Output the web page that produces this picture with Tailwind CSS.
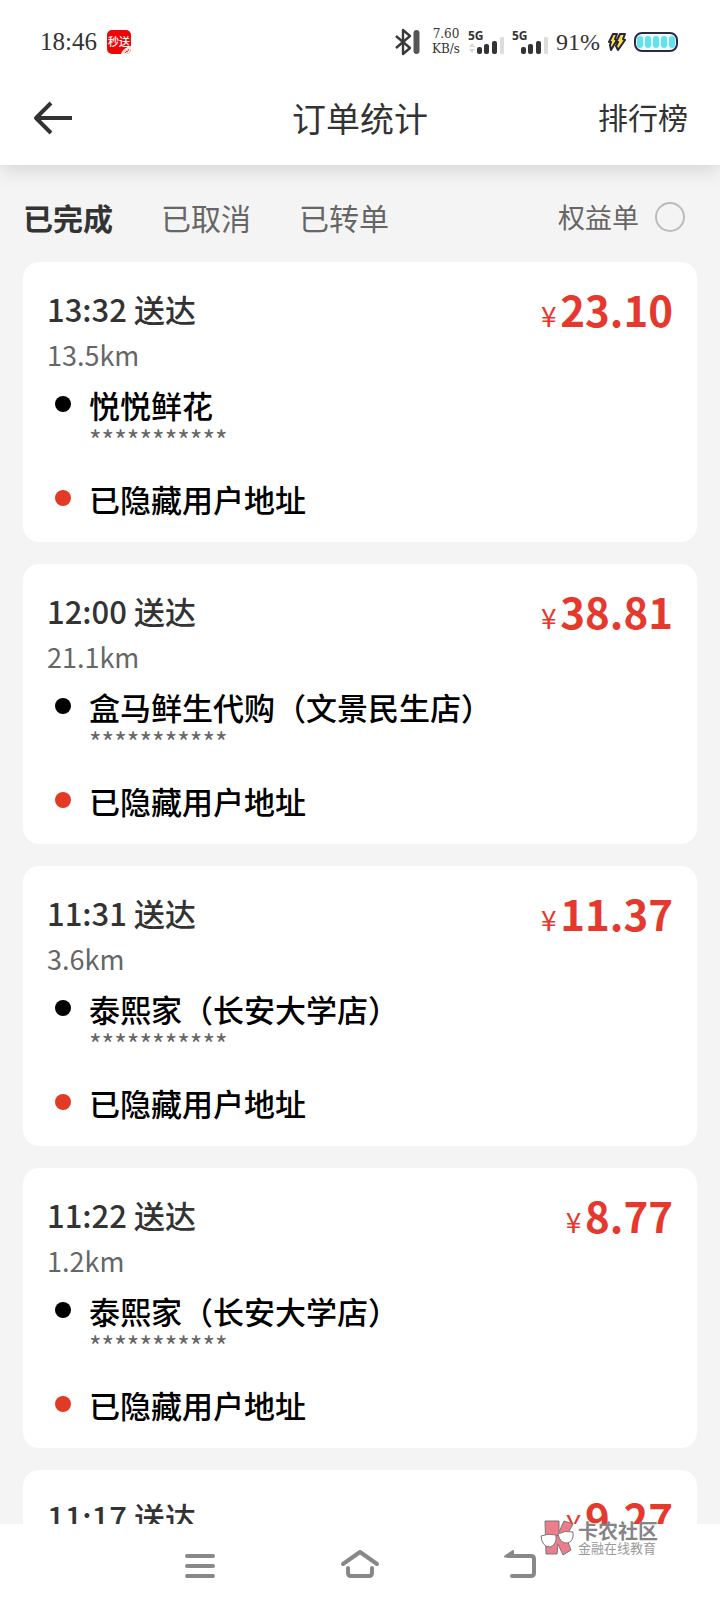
<!DOCTYPE html>
<html lang="zh-CN">
<head>
    <meta charset="UTF-8">
    <meta name="viewport" content="width=device-width, initial-scale=1.0">
    <title>订单统计</title>
    <script src="https://cdn.jsdelivr.net/npm/@tailwindcss/browser@4"></script>
</head>
<body class="relative flex h-screen flex-col overflow-hidden bg-[#f4f4f4] font-['Noto_Sans_CJK_SC',sans-serif] text-[#333]">

    <!-- Top area: status bar + title bar -->
    <header class="relative z-10 shrink-0 bg-white shadow-[0_4px_20px_rgba(0,0,0,0.14)]">
        <div class="flex h-[84px] items-center justify-between pl-10 pr-[42px] font-['Liberation_Serif','Noto_Sans_CJK_SC',serif]">
            <div class="flex items-center gap-2.5">
                <span class="text-[25px] leading-7">18:46</span>
                <span class="relative flex h-6 w-6 items-center justify-center overflow-hidden rounded-[5px] bg-[#ee0505] pb-0.5 font-['Noto_Sans_CJK_SC',sans-serif] text-[11px] font-medium leading-none text-white">秒送
                    <svg class="absolute bottom-0 right-0 h-2 w-2.5" viewBox="0 0 10 8"><path d="M0 8C1 4 5 1 10 0v8z" fill="#fde4e4"/><path d="M4 7l2-2M6 6l2-3" stroke="#c33" stroke-width="1"/></svg>
                </span>
            </div>
            <div class="flex items-center gap-2">
                <svg class="mr-0.5 h-7 w-7" viewBox="0 0 28 28" fill="none" stroke="#3a3a3a">
                    <path d="M2 8l14 12-7 6V2l7 6L2 20" stroke-width="2.4" stroke-linejoin="round"/>
                    <path d="M22.500 5v18" stroke="#555" stroke-width="6" stroke-linecap="round"/>
                </svg>
                <span class="flex flex-col items-center font-['DejaVu_Serif',serif] text-xs leading-[15px]"><span>7.60</span><span>KB/s</span></span>
                <svg class="h-7 w-9" viewBox="0 0 36 28">
                    <text x="0" y="12" font-family="Noto Sans" font-size="12" font-weight="bold" fill="#333">5G</text>
                    <path d="M1 19l3-4 3 4zM1 21l3 4 3-4z" fill="#d8d8d8"/>
                    <rect x="9" y="19" width="5" height="7" rx="2" fill="#333"/>
                    <rect x="16" y="16" width="5" height="10" rx="2" fill="#333"/>
                    <rect x="24" y="13" width="5" height="13" rx="2" fill="#333"/>
                    <rect x="32" y="9" width="4" height="17" rx="1" fill="#ddd"/>
                </svg>
                <svg class="h-7 w-9" viewBox="0 0 36 28">
                    <text x="0" y="12" font-family="Noto Sans" font-size="12" font-weight="bold" fill="#333">5G</text>
                    <rect x="9" y="19" width="5" height="7" rx="2" fill="#333"/>
                    <rect x="16" y="16" width="5" height="10" rx="2" fill="#333"/>
                    <rect x="24" y="13" width="5" height="13" rx="2" fill="#333"/>
                    <rect x="32" y="9" width="4" height="17" rx="1" fill="#ddd"/>
                </svg>
                <span class="text-2xl leading-7">91%</span>
                <svg class="h-5 w-[18px]" viewBox="0 0 18 20" fill="#f6e04e" stroke="#2a2436" stroke-width="2" stroke-linejoin="round">
                    <path d="M5 2h4L7 7l2 1-6 10-1-5 1-3H1z"/>
                    <path d="M12 2h5l-2 5 2 1-7 10-2-4 2-4H8z"/>
                </svg>
                <svg class="h-5 w-11" viewBox="0 0 44 20">
                    <rect x="1" y="1" width="42" height="18" rx="7" fill="#eefcff" stroke="#2a2a48" stroke-width="2"/>
                    <g fill="#5fe3ee">
                        <rect x="3" y="4" width="6" height="12" rx="3"/>
                        <rect x="11" y="4" width="6" height="12" rx="3"/>
                        <rect x="19" y="4" width="6" height="12" rx="3"/>
                        <rect x="27" y="4" width="6" height="12" rx="3"/>
                        <rect x="35" y="4" width="6" height="12" rx="3"/>
                    </g>
                </svg>
            </div>
        </div>
        <div class="grid h-[81px] grid-cols-3 items-start px-8">
            <button type="button" aria-label="返回" class="mt-4 w-10">
                <svg class="h-9 w-10" viewBox="0 0 40 36" fill="none" stroke="#333" stroke-width="4">
                    <path d="M40 18H4M19 3L4 18l15 15" stroke-linejoin="round"/>
                </svg>
            </button>
            <h1 class="mt-2.5 text-center text-[34px] leading-[48px]">订单统计</h1>
            <a href="#rank" class="mt-2.5 text-right text-[30px] leading-[44px]">排行榜</a>
        </div>
    </header>

    <main class="min-h-0 flex-1 overflow-hidden px-[23px]">
        <!-- Tabs -->
        <div class="flex h-[97px] items-center justify-between pr-3 pt-1.5 text-[#666]">
            <nav class="flex gap-12 text-[30px] leading-[44px]">
                <button type="button" class="font-bold text-[#333]">已完成</button>
                <button type="button">已取消</button>
                <button type="button">已转单</button>
            </nav>
            <label class="flex items-center gap-4 text-[27px] leading-10">
                权益单
                <input type="radio" name="benefit" class="h-[30px] w-[30px] appearance-none rounded-full border-2 border-[#bbb]">
            </label>
        </div>

        <!-- Order list -->
        <div id="orders" class="flex flex-col gap-[22px]"></div>
    </main>

    <!-- System navigation -->
    <footer class="h-[84px] shrink-0 bg-white">
        <div class="mx-auto grid h-full w-2/3 grid-cols-3 place-items-center">
            <button type="button" aria-label="最近任务">
                <svg class="h-10 w-10" viewBox="0 0 40 40" fill="none" stroke="#888" stroke-width="4" stroke-linecap="round"><path d="M7 10h26M7 20h26M7 30h26"/></svg>
            </button>
            <button type="button" aria-label="主屏幕">
                <svg class="h-10 w-10" viewBox="0 0 40 40" fill="none" stroke="#888" stroke-width="4" stroke-linecap="round" stroke-linejoin="round"><path d="M3 18L20 6l17 12M8 22v5q0 3 3 3h18q3 0 3-3v-5"/></svg>
            </button>
            <button type="button" aria-label="返回上一级">
                <svg class="h-10 w-10" viewBox="0 0 40 40" fill="none" stroke="#888" stroke-width="4" stroke-linecap="round" stroke-linejoin="round"><path d="M12 30h19q3 0 3-3V13q0-3-3-3H8"/><path d="M5 10.500L13 5v5.500z" fill="#888" stroke-width="2"/></svg>
            </button>
        </div>
    </footer>

    <!-- Watermark -->
    <div class="absolute bottom-[52px] right-[62px] flex items-center gap-1 text-[#858585]">
        <svg class="h-9 w-[34px]" viewBox="0 0 34 36" stroke="#777" stroke-width="1">
            <path d="M5 1h14v11l5-11 9 3-7 13 5 13-8 5-5-11-1 10H6z" fill="#ee7d8b"/>
            <path d="M1 16q7-3 15-1 1 10-6 12-8 0-9-11zM18 14q7-4 15-2 1 9-5 11-8 1-10-9z" fill="#fff"/>
            <path d="M16 16l2-1"/>
        </svg>
        <div>
            <p class="text-xl font-bold leading-5">卡农社区</p>
            <p class="text-[13px] leading-3.5 text-[#999]">金融在线教育</p>
        </div>
    </div>

    <script>
        const orders = [
            { time: '13:32', price: '23.10', distance: '13.5km', shop: '悦悦鲜花' },
            { time: '12:00', price: '38.81', distance: '21.1km', shop: '盒马鲜生代购（文景民生店）' },
            { time: '11:31', price: '11.37', distance: '3.6km', shop: '泰熙家（长安大学店）' },
            { time: '11:22', price: '8.77', distance: '1.2km', shop: '泰熙家（长安大学店）' },
            { time: '11:17', price: '9.27' },
        ];

        function renderDetails(order) {
            if (!order.shop) return '';
            return `
                <p class="mt-[3px] text-[27px] leading-10 text-[#666]">${order.distance}</p>
                <div class="flex gap-[18px] pl-2 pt-[7px]">
                    <span class="mt-3.5 h-4 w-4 rounded-full bg-black"></span>
                    <div>
                        <p class="text-[31px] font-medium leading-[46px] text-black">${order.shop}</p>
                        <p class="text-[27px] leading-6 text-[#666]">***********</p>
                    </div>
                </div>
                <div class="flex gap-[18px] pl-2 pt-6">
                    <span class="mt-3.5 h-4 w-4 rounded-full bg-[#e23a24]"></span>
                    <p class="text-[31px] font-medium leading-[46px] text-black">已隐藏用户地址</p>
                </div>`;
        }

        document.getElementById('orders').innerHTML = orders.map(order => `
            <article class="rounded-2xl bg-white px-6 pb-5 pt-6">
                <div class="flex h-[46px] items-start justify-between leading-[46px]">
                    <h2 class="text-[31px] font-medium">${order.time} 送达</h2>
                    <p class="text-[#e6392e]"><span class="text-[28px]">¥</span> <b class="text-[42px] font-bold">${order.price}</b></p>
                </div>
                ${renderDetails(order)}
            </article>`).join('');
    </script>
</body>
</html>
